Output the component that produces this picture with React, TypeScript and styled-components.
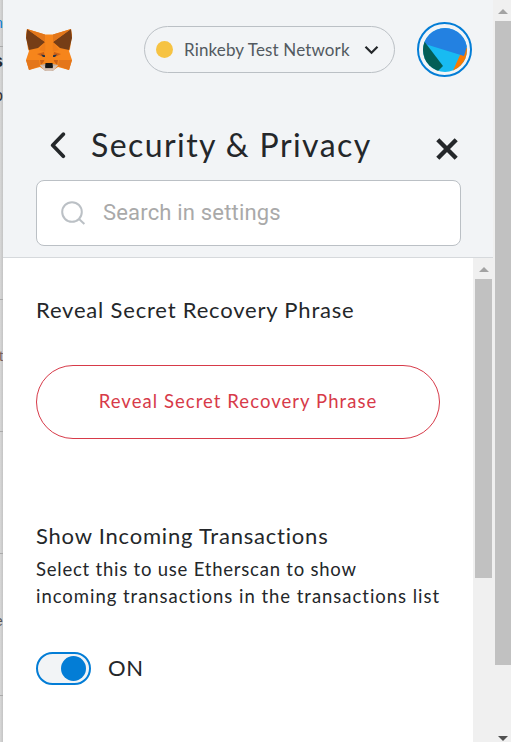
import React from "react";
import styled, { createGlobalStyle } from "styled-components";

const GlobalStyle = createGlobalStyle`
  * { box-sizing: border-box; }
  body { margin: 0; background: #fff; overflow: hidden; }
`;

const Screen = styled.div`
  display: flex;
  width: 511px;
  height: 742px;
  overflow: hidden;
  font-family: Lato, "Liberation Sans", sans-serif;
  color: #24272a;
`;

const PageEdge = styled.div`
  display: flex;
  flex-direction: column;
  flex: 0 0 3px;
  overflow: hidden;
  background: linear-gradient(to right, #d8d8d8, #c4c4c4);
`;

const EdgeBlock = styled.div<{ $h: number; $line?: boolean }>`
  flex: 0 0 ${(p) => p.$h}px;
  border-bottom: ${(p) => (p.$line ? "1px solid #aaa" : "0")};
`;

const EdgeGlyph = styled.div<{ $h: number; $size: number; $shift: number; $color: string; $bold?: boolean }>`
  flex: 0 0 ${(p) => p.$h}px;
  display: flex;
  align-items: center;
  width: 30px;
  margin-left: ${(p) => p.$shift}px;
  font: ${(p) => (p.$bold ? 700 : 400)} ${(p) => p.$size}px "Liberation Sans", sans-serif;
  color: ${(p) => p.$color};
`;

const Popup = styled.main`
  display: flex;
  flex-direction: column;
  flex: 0 0 490px;
  min-width: 0;
  background: #f2f4f6;
`;

const AppHeader = styled.header`
  display: flex;
  align-items: center;
  height: 99px;
  padding: 0 21px 0 23px;
`;

const FoxLogo = styled.svg`
  margin-top: 2px;
`;

const NetworkButton = styled.button`
  display: flex;
  align-items: center;
  width: 251px;
  height: 47px;
  margin: 0 22px 0 auto;
  padding: 0 15px 0 11px;
  border: 1px solid #bbc0c5;
  border-radius: 24px;
  background: transparent;
  color: #535a61;
  font: 400 17px/24px Lato, sans-serif;
  letter-spacing: 0.14px;
  white-space: nowrap;
`;

const NetworkDot = styled.span`
  width: 17px;
  height: 17px;
  margin-right: 11px;
  border-radius: 50%;
  background: #f6c343;
`;

const NetworkChevron = styled.svg`
  margin-left: auto;
`;

const AccountRing = styled.div`
  display: grid;
  place-items: center;
  width: 55px;
  height: 55px;
  border: 2px solid #037dd6;
  border-radius: 50%;
`;

const TitleBar = styled.div`
  display: flex;
  align-items: center;
  height: 81px;
  padding: 0 35px 0 47px;
`;

const Title = styled.h1`
  margin: 10px 0 0 25px;
  font-size: 32px;
  font-weight: 400;
  line-height: 44px;
  letter-spacing: 1.42px;
  white-space: nowrap;
`;

const CloseIcon = styled.svg`
  margin: 18px 0 0 auto;
`;

const BackIcon = styled.svg`
  margin-top: 11px;
`;

const SearchField = styled.label`
  display: flex;
  align-items: center;
  width: 425px;
  height: 66px;
  margin: 0 0 11px 33px;
  padding-left: 24px;
  gap: 17px;
  border: 1px solid #bbc0c5;
  border-radius: 8px;
  background: #fff;
`;

const SearchInput = styled.input`
  width: 320px;
  padding: 0;
  border: 0;
  outline: 0;
  background: transparent;
  font: 400 22px/28px Roboto, sans-serif;
  letter-spacing: 0.18px;
  &::placeholder { color: #a9a9a9; opacity: 1; }
`;

const Body = styled.div`
  display: flex;
  flex: 1;
  border-top: 1px solid #d6d9dc;
  background: #fff;
`;

const Settings = styled.div`
  flex: 0 0 470px;
  min-width: 0;
  padding: 35px 33px 0;
`;

const Heading = styled.h2<{ $spacing: number }>`
  margin: 0;
  font-size: 22px;
  font-weight: 400;
  line-height: 33px;
  letter-spacing: ${(p) => p.$spacing}px;
  white-space: nowrap;
`;

const RevealButton = styled.button`
  display: block;
  width: 404px;
  height: 74px;
  margin: 39px 0 80px;
  padding: 0 0 2px;
  border: 1px solid #d73a49;
  border-radius: 37px;
  background: #fff;
  color: #d73a49;
  font: 400 18.5px/26px Lato, sans-serif;
  letter-spacing: 1.05px;
`;

const Description = styled.p`
  margin: 4px 0 42px;
  font-size: 18.5px;
  line-height: 27px;
`;

const Line = styled.span<{ $spacing: number }>`
  display: block;
  letter-spacing: ${(p) => p.$spacing}px;
  white-space: nowrap;
`;

const ToggleRow = styled.div`
  display: flex;
  align-items: center;
  gap: 17px;
`;

const ToggleLabel = styled.span`
  padding-bottom: 2px;
  font-size: 22px;
  line-height: 31px;
  letter-spacing: 0.6px;
`;

const Toggle = styled.span`
  display: flex;
  align-items: center;
  justify-content: flex-end;
  width: 55px;
  height: 33px;
  padding-right: 3px;
  border: 2px solid #037dd6;
  border-radius: 17px;
  background: #f2f4f6;
`;

const Knob = styled.span`
  width: 25px;
  height: 25px;
  border-radius: 50%;
  background: #037dd6;
`;

const Scrollbar = styled.div<{ $width: number; $pad: string }>`
  display: flex;
  flex-direction: column;
  flex: 0 0 ${(p) => p.$width}px;
  padding: ${(p) => p.$pad};
  background: #f0f0f0;
`;

const ScrollThumb = styled.div<{ $h: number }>`
  height: ${(p) => p.$h}px;
  background: #c1c1c1;
`;

const ArrowButton = styled.svg`
  display: block;
  flex: none;
  align-self: center;
`;

const DownArrow = styled(ArrowButton)`
  margin-top: auto;
`;

function Fox() {
  return (
    <FoxLogo width="46" height="44" viewBox="0 0 46 44">
      <path fill="#f6851b" d="M1 0 19 5.5h8L45 0l1 6-2 14-1 2 3 9-3 10-11-3-6 4h-6l-6-4-11 3-3-10 3-9-1-2L0 6z" />
      <path fill="#e4761b" d="M0 31h13l1 6-11 4zM46 31H33l-1 6 11 4z" />
      <path fill="#ee7d1b" d="m19 13-6 8 7 2zM27 13l6 8-7 2z" />
      <path fill="#763d16" d="M1 0 19 13l-7 6-9 2L0 9zM45 0 27 13l7 6 9 2 3-12z" />
      <path fill="#e2761b" d="m1 0 18 5.5V13zM45 0 27 5.5V13z" />
      <path fill="#cd6116" d="m11 25 7-2 1 5-4-1zM35 25l-7-2-1 5 4-1zM14 31l5 0-4 5zM32 31l-5 0 4 5z" />
      <path fill="#f6851b" d="M20 13h6l2 21H18z" />
      <path fill="#c0ad9e" d="m14 36 5-1h8l5 1-5 6h-8z" />
      <path fill="#d7c1b3" d="m14 36 5 1v3h8v-3l5-1-4 5-3 1h-4l-3-1z" />
      <path fill="#233447" d="m15 25.5 4 .8V28h-2zM31 25.5l-4 .8V28h2z" />
      <path fill="#161616" d="M19.5 34h7l.5 4.5-1 .5h-6l-1-.5z" />
    </FoxLogo>
  );
}

function AccountAvatar() {
  return (
    <svg width="44" height="44" viewBox="0 0 44 44">
      <defs>
        <clipPath id="avatar-circle"><circle cx="22" cy="22" r="22" /></clipPath>
      </defs>
      <g clipPath="url(#avatar-circle)">
        <path fill="#18bbf2" d="M0 0h44v44H0z" />
        <path fill="#fa7900" d="m37 27 9-10v30H28z" />
        <path fill="#2381e1" d="M0-2h46v14l-5 16L2 16z" />
        <path fill="#035e56" d="m1 13 19 25-6 6H-4V13z" />
      </g>
    </svg>
  );
}

export default function App() {
  return (
    <>
      <GlobalStyle />
      <Screen>
        <PageEdge>
          <EdgeGlyph $h={46} $size={14} $shift={-5} $color="#037dd6">n</EdgeGlyph>
          <EdgeBlock $h={1} $line />
          <EdgeGlyph $h={28} $size={18} $shift={-7} $color="#24272a" $bold>s</EdgeGlyph>
          <EdgeGlyph $h={42} $size={16} $shift={-6} $color="#333">o</EdgeGlyph>
          <EdgeBlock $h={183} $line />
          <EdgeGlyph $h={110} $size={15} $shift={-1} $color="#7b6258">t</EdgeGlyph>
          <EdgeBlock $h={22} $line />
          <EdgeBlock $h={122} $line />
          <EdgeGlyph $h={133} $size={14} $shift={-5} $color="#555">e</EdgeGlyph>
          <EdgeBlock $h={9} $line />
        </PageEdge>
        <Popup>
          <AppHeader>
            <Fox />
            <NetworkButton>
              <NetworkDot />
              Rinkeby Test Network
              <NetworkChevron width="15" height="10" viewBox="0 0 15 10" fill="none" stroke="#24272a" strokeWidth="2.2">
                <path d="m1.5 1.8 6 6 6-6" />
              </NetworkChevron>
            </NetworkButton>
            <AccountRing><AccountAvatar /></AccountRing>
          </AppHeader>
          <TitleBar>
            <BackIcon width="16" height="27" viewBox="0 0 16 27" fill="none" stroke="#24272a" strokeWidth="3.7" strokeLinecap="round" strokeLinejoin="round">
              <path d="M13.3 2.2 2.7 13.2l10.6 11" />
            </BackIcon>
            <Title>Security &amp; Privacy</Title>
            <CloseIcon width="22" height="22" viewBox="0 0 22 22" fill="none" stroke="#24272a" strokeWidth="4.4">
              <path d="m1.8 1.8 18.4 18.4M20.2 1.8 1.8 20.2" />
            </CloseIcon>
          </TitleBar>
          <SearchField>
            <svg width="25" height="25" viewBox="0 0 25 25" fill="none" stroke="#bbc0c5" strokeWidth="2">
              <circle cx="11" cy="11" r="9.8" />
              <path d="m18 18 5.4 5" />
            </svg>
            <SearchInput placeholder="Search in settings" />
          </SearchField>
          <Body>
            <Settings>
              <Heading $spacing={0.81}>Reveal Secret Recovery Phrase</Heading>
              <RevealButton>Reveal Secret Recovery Phrase</RevealButton>
              <Heading $spacing={0.79}>Show Incoming Transactions</Heading>
              <Description>
                <Line $spacing={0.78}>Select this to use Etherscan to show</Line>
                <Line $spacing={0.97}>incoming transactions in the transactions list</Line>
              </Description>
              <ToggleRow>
                <Toggle><Knob /></Toggle>
                <ToggleLabel>ON</ToggleLabel>
              </ToggleRow>
            </Settings>
            <Scrollbar $width={20} $pad="8px 1px 0 2px">
              <ArrowButton width="10" height="13" viewBox="0 0 10 13">
                <path fill="#a3a3a3" d="m0 6 5-5 5 5z" />
              </ArrowButton>
              <ScrollThumb $h={299} />
            </Scrollbar>
          </Body>
        </Popup>
        <Scrollbar $width={18} $pad="8px 0 0 2px">
          <ArrowButton width="10" height="13" viewBox="0 0 10 13">
            <path fill="#a3a3a3" d="m0 6 5-5 5 5z" />
          </ArrowButton>
          <ScrollThumb $h={644} />
          <DownArrow width="10" height="7" viewBox="0 0 10 7">
            <path fill="#505050" d="m0 1 5 5 5-5z" />
          </DownArrow>
        </Scrollbar>
      </Screen>
    </>
  );
}
